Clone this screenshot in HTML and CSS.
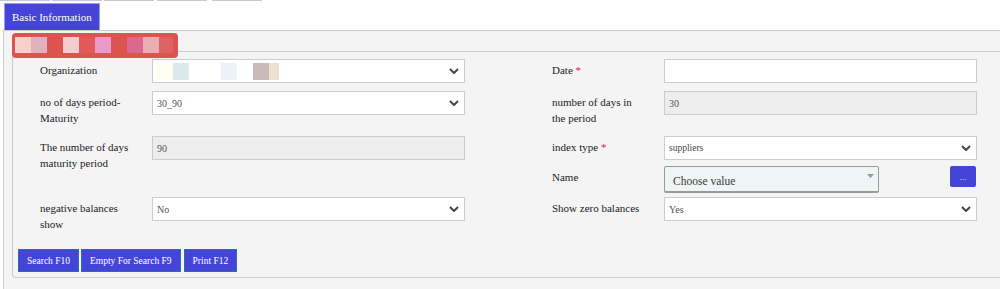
FILE: index.html
```html
<!DOCTYPE html>
<html lang="en">
<head>
    <meta charset="UTF-8">
    <title>Basic Information</title>
    <link rel="stylesheet" href="styles.css">
</head>
<body>
    <div class="strip">
        <span></span><span></span><span></span><span></span><span></span>
    </div>
    <div class="tabbar">
        <div class="tab">Basic Information</div>
    </div>

    <div class="panel">
        <div class="legend">
            <i class="px c1"></i><i class="px c2"></i><i class="px"></i><i class="px c3"></i><i class="px c4"></i>
            <i class="px c5"></i><i class="px"></i><i class="px c6"></i><i class="px c7"></i><i class="px c8"></i>
        </div>

        <div class="group">
            <div class="rows">
                <div class="row">
                    <div class="pair">
                        <div class="lbl">Organization</div>
                        <div class="field">
                            <span class="blur">
                                <i class="px o1"></i><i class="px o2"></i><i class="px o0"></i><i class="px o0"></i><i class="px o3"></i><i class="px o0"></i><i class="px o4"></i><i class="px o5"></i>
                            </span>
                            <svg class="chev" width="10" height="6" viewBox="0 0 10 6"><path d="M1 1 L5 5 L9 1" /></svg>
                        </div>
                    </div>
                    <div class="pair">
                        <div class="lbl">Date <span class="req">*</span></div>
                        <div class="field"></div>
                    </div>
                </div>

                <div class="row">
                    <div class="pair">
                        <div class="lbl">no of days period-Maturity</div>
                        <div class="field">
                            <span>30_90</span>
                            <svg class="chev" width="10" height="6" viewBox="0 0 10 6"><path d="M1 1 L5 5 L9 1" /></svg>
                        </div>
                    </div>
                    <div class="pair">
                        <div class="lbl">number of days in the period</div>
                        <div class="field disabled"><span>30</span></div>
                    </div>
                </div>

                <div class="row row-tight">
                    <div class="pair">
                        <div class="lbl">The number of days maturity period</div>
                        <div class="field disabled"><span>90</span></div>
                    </div>
                    <div class="pair">
                        <div class="lbl">index type <span class="req">*</span></div>
                        <div class="field small">
                            <span>suppliers</span>
                            <svg class="chev" width="10" height="6" viewBox="0 0 10 6"><path d="M1 1 L5 5 L9 1" /></svg>
                        </div>
                        <div class="lbl">Name</div>
                        <div class="name-field">
                            <div class="combo">
                                <span>Choose value</span>
                                <svg width="7" height="4" viewBox="0 0 7 4"><path d="M0 0 L7 0 L3.5 4 Z" /></svg>
                            </div>
                            <button class="dots">...</button>
                        </div>
                    </div>
                </div>

                <div class="row">
                    <div class="pair">
                        <div class="lbl">negative balances show</div>
                        <div class="field">
                            <span>No</span>
                            <svg class="chev" width="10" height="6" viewBox="0 0 10 6"><path d="M1 1 L5 5 L9 1" /></svg>
                        </div>
                    </div>
                    <div class="pair">
                        <div class="lbl">Show zero balances</div>
                        <div class="field">
                            <span>Yes</span>
                            <svg class="chev" width="10" height="6" viewBox="0 0 10 6"><path d="M1 1 L5 5 L9 1" /></svg>
                        </div>
                    </div>
                </div>
            </div>

            <div class="actions">
                <button class="btn">Search F10</button>
                <button class="btn">Empty For Search F9</button>
                <button class="btn">Print F12</button>
            </div>
        </div>
    </div>
</body>
</html>
```

FILE: styles.css
```css
* {
    box-sizing: border-box;
}

body {
    margin: 0;
    background: #fff;
    font-family: "Liberation Serif", "Times New Roman", serif;
    font-size: 11px;
    color: #222;
    overflow: hidden;
}

/* row of old tab underlines on top */
.strip {
    display: flex;
    gap: 2px;
    height: 3px;
}

.strip span {
    width: 50px;
    height: 1px;
    background: #c8c8c8;
}

.strip span:nth-child(4) {
    margin-left: 1px;
}

.strip span:nth-child(5) {
    margin-left: 3px;
}

.tabbar {
    height: 27px;
    padding-left: 4px;
}

.tab {
    display: inline-block;
    width: 96px;
    height: 27px;
    padding-left: 7px;
    background: #4444d8;
    border: 1px solid #9c9ce8;
    border-bottom: none;
    color: #fff;
    line-height: 26px;
    font-size: 11px;
}

.panel {
    height: 259px;
    margin-left: 3px;
    padding: 1px 0 0 8px;
    background: #f4f4f4;
    border-top: 1px solid #ccc;
    border-left: 1px solid #ccc;
}

.legend {
    position: relative;
    z-index: 1;
    display: flex;
    width: 166px;
    height: 25px;
    margin-top: 1px;
    padding: 4px 0 0 3px;
    background: #dc5450;
    border-radius: 4px;
}

.px {
    display: block;
    width: 16px;
    height: 16px;
}

.c1 { background: #f7d1c9; }
.c2 { background: #e1b1bd; }
.c3 { background: #f3ccd0; }
.c4 { background: #e25a58; }
.c5 { background: #e89acb; }
.c6 { background: #dc6890; }
.c7 { background: #e9aeb2; }
.c8 { background: #dd6262; width: 14px; }

.group {
    margin-top: -7px;
    padding: 7px 0 5px 5px;
    border: 1px solid #ccc;
    border-right: none;
    border-radius: 0 0 0 4px;
}

.rows {
    padding-left: 22px;
}

.row {
    display: grid;
    grid-template-columns: 425px 425px;
    column-gap: 87px;
    margin-bottom: 8px;
}

.row-tight {
    margin-bottom: 4px;
}

.pair {
    display: grid;
    grid-template-columns: 112px 313px;
    align-items: start;
    row-gap: 6px;
}

.lbl {
    padding: 3px 19px 2px 0;
    line-height: 16px;
}

.req {
    color: #e8141e;
}

.field {
    display: flex;
    align-items: center;
    justify-content: space-between;
    height: 24px;
    padding: 0 5px 0 4px;
    background: #fff;
    border: 1px solid #ccc;
    font-size: 10px;
    color: #555;
}

.field.disabled {
    background: #ededed;
}

.field.small {
    font-size: 9.5px;
    color: #444;
}

.chev path {
    fill: none;
    stroke: #444;
    stroke-width: 2;
}

.blur {
    display: flex;
}

.blur .px {
    height: 17px;
}

.o0 { background: #fff; }
.o1 { background: #fefef3; }
.o2 { background: #dbe8ec; }
.o3 { background: #edf2f9; }
.o4 { background: #c8bcb8; }
.o5 { background: #eee1cd; width: 10px; }

.name-field {
    display: flex;
    justify-content: space-between;
    align-items: flex-start;
    padding-right: 1px;
}

.combo {
    display: flex;
    align-items: center;
    justify-content: space-between;
    width: 215px;
    height: 27px;
    padding: 3px 4px 0 8px;
    background: #eef5f4;
    border: 1px solid #9a9a9a;
    border-bottom-width: 2px;
    border-radius: 2px;
    font-size: 11.5px;
    color: #3a3a3a;
}

.combo svg {
    margin-top: -9px;
}

.combo path {
    fill: #999;
}

.dots {
    width: 26px;
    height: 21px;
    padding: 0;
    background: #4444d8;
    border: none;
    border-radius: 2px;
    color: #dfe0ff;
    font-family: inherit;
    font-size: 9px;
}

.actions {
    display: flex;
    gap: 2px;
    margin-top: 15px;
}

.btn {
    height: 23px;
    padding: 0 8px;
    background: #4444d8;
    border: 1px solid #2c6fa0;
    color: #fff;
    font-family: inherit;
    font-size: 9.5px;
}

.btn:last-child {
    margin-left: 1px;
}
```
